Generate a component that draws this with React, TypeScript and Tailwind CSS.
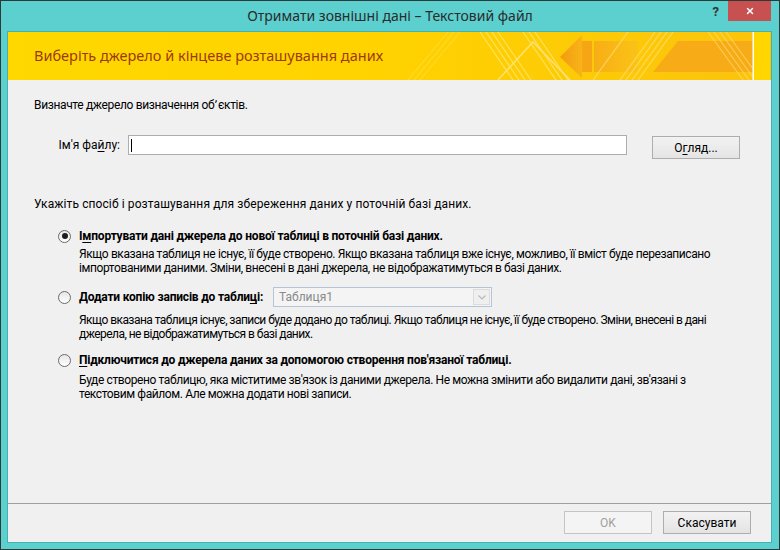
import { X } from "lucide-react";

function Radio({ checked }: { checked?: boolean }) {
  return (
    <span className="w-[13px] h-[13px] rounded-full border border-[#6a6a6a] bg-gradient-to-b from-[#e6e6e6] to-white flex items-center justify-center shrink-0">
      {checked && <span className="w-[6px] h-[6px] rounded-full bg-[#1c1c1c]" />}
    </span>
  );
}

function Banner() {
  return (
    <div className="relative h-[48px] shrink-0 bg-gradient-to-r from-[#ffd800] via-[#ffd200] to-[#fbc30c] flex items-center pl-[26px]">
      <svg className="absolute inset-0" width="762" height="48" viewBox="0 0 762 48">
        <defs>
          <linearGradient id="arrow" x1="0" x2="1" y1="0" y2="0">
            <stop offset="0" stopColor="#f39a10" />
            <stop offset="1" stopColor="#f8b418" />
          </linearGradient>
          <linearGradient id="shaft" x1="0" x2="1" y1="0" y2="0">
            <stop offset="0" stopColor="#f7ae16" />
            <stop offset="1" stopColor="#fbc315" />
          </linearGradient>
        </defs>
        {/* faint stripes */}
        <g stroke="#fff3a0" strokeOpacity="0.35" strokeWidth="1">
          <line x1="400" y1="48" x2="440" y2="0" />
          <line x1="406" y1="48" x2="446" y2="0" />
          <line x1="412" y1="48" x2="452" y2="0" />
        </g>
        <g stroke="#fff2a0" strokeOpacity="0.55" strokeWidth="1.2">
          <line x1="472" y1="0" x2="505" y2="48" />
          <line x1="478" y1="0" x2="511" y2="48" />
          <line x1="484" y1="0" x2="517" y2="48" />
          <line x1="490" y1="0" x2="523" y2="48" />
          <line x1="515" y1="0" x2="548" y2="48" />
          <line x1="521" y1="0" x2="554" y2="48" />
          <line x1="527" y1="0" x2="560" y2="48" />
        </g>
        <polyline points="490,48 525,10 562,48" fill="none" stroke="#ffe27a" strokeOpacity="0.9" strokeWidth="1.6" />
        {/* arrow */}
        <polygon points="552,25 574,3 574,46" fill="url(#arrow)" />
        <rect x="574" y="9" width="10" height="31" fill="#f6a514" />
        <rect x="586" y="9" width="44" height="31" fill="url(#shaft)" />
        <g stroke="#ffe07a" strokeOpacity="0.7" strokeWidth="1.2">
          <line x1="585" y1="48" x2="620" y2="0" />
          <line x1="612" y1="48" x2="647" y2="0" />
          <line x1="618" y1="48" x2="653" y2="0" />
          <line x1="624" y1="48" x2="659" y2="0" />
          <line x1="630" y1="48" x2="665" y2="0" />
        </g>
        {/* trapezoid */}
        <polygon points="645,40 670,9 745,9 745,40" fill="#f7ab17" />
        <g stroke="#ffdf7a" strokeOpacity="0.6" strokeWidth="1.2">
          <line x1="700" y1="0" x2="735" y2="48" />
          <line x1="706" y1="0" x2="741" y2="48" />
          <line x1="712" y1="0" x2="747" y2="48" />
          <line x1="718" y1="0" x2="753" y2="48" />
        </g>
        <rect x="745" y="0" width="17" height="48" fill="#ffd600" />
        <rect x="744.5" y="0" width="1.5" height="48" fill="#ffffff" />
      </svg>
      <span className="relative font-['Noto_Sans',sans-serif] text-[14.5px] text-[#9c3a0c]">
        Виберіть джерело й кінцеве розташування даних
      </span>
    </div>
  );
}

function Btn({ children, disabled }: { children: React.ReactNode; disabled?: boolean }) {
  return (
    <div
      className={
        disabled
          ? "w-[88px] h-[23px] border border-[#c4c4c4] bg-[#f4f4f4] text-[#a0a0a0] flex items-center justify-center"
          : "w-[88px] h-[23px] border border-[#adadad] bg-gradient-to-b from-[#f2f2f2] to-[#e4e4e4] flex items-center justify-center"
      }
    >
      {children}
    </div>
  );
}

export default function App() {
  return (
    <div className="w-[780px] h-[550px] bg-[#5ccfcf] border border-[#2e3a3a] flex flex-col overflow-hidden font-['Roboto',sans-serif] text-[12px] text-black">
      {/* title bar */}
      <div className="relative h-[30px] shrink-0 flex items-center justify-center">
        <span className="font-['Noto_Sans',sans-serif] text-[14px] text-[#2b2b2b] -mt-[1px]">
          Отримати зовнішні дані – Текстовий файл
        </span>
        <span className="absolute right-[60px] top-[1px] text-[13px] font-bold text-[#333]">?</span>
        <div className="absolute right-[8px] top-0 w-[43px] h-[20px] bg-[#c75050] flex items-center justify-center">
          <X className="w-[10px] h-[10px] text-white" strokeWidth={3.5} />
        </div>
      </div>

      {/* client area */}
      <div className="flex-1 ml-[6px] mr-[7px] mb-[6px] border border-[#45b2b2] bg-[#f0f0f0] flex flex-col">
        <Banner />

        <div className="flex-1 pl-[26px] leading-[16px]">
          <div className="mt-[17px] tracking-[-0.35px]">Визначте джерело визначення об՚єктів.</div>

          <div className="mt-[22px] flex items-start">
            <div className="w-[86px] h-[20px] flex items-center justify-end">
              Ім'я фа<span className="underline underline-offset-2">й</span>лу:
            </div>
            <div className="ml-[8px] w-[499px] h-[20px] border border-[#abadb3] bg-white flex items-center pl-[2px]">
              <span className="w-[1px] h-[13px] bg-black" />
            </div>
            <div className="ml-[25px] mt-[1px]">
              <Btn>
                О<span className="underline underline-offset-2">г</span>ляд...
              </Btn>
            </div>
          </div>

          <div className="mt-[37px] tracking-[0.1px]">
            Укажіть спосіб і розташування для збереження даних у поточній базі даних.
          </div>

          <div className="ml-[24px]">
            <div className="mt-[16px] flex items-center gap-[8px]">
              <Radio checked />
              <span className="font-bold whitespace-nowrap tracking-[-0.2px]">
                І<span className="underline underline-offset-2">м</span>портувати дані джерела до нової таблиці в поточній базі даних.
              </span>
            </div>
            <div className="mt-[3px] ml-[21px] leading-[14px] whitespace-nowrap tracking-[-0.4px]">
              Якщо вказана таблиця не існує, її буде створено. Якщо вказана таблиця вже існує, можливо, її вміст буде перезаписано
              <br />
              імпортованими даними. Зміни, внесені в дані джерела, не відображатимуться в базі даних.
            </div>

            <div className="mt-[12px] h-[20px] flex items-center">
              <Radio />
              <span className="ml-[8px] w-[194px] font-bold whitespace-nowrap tracking-[-0.2px]">
                Додати копію записів до табли<span className="underline underline-offset-2">ц</span>і:
              </span>
              <div className="w-[219px] h-[20px] border border-[#b5c4d6] bg-[#f4f4f4] flex items-center">
                <span className="flex-1 pl-[5px] text-[#8a8a8a]">Таблиця1</span>
                <div className="w-[17px] h-[16px] mr-[1px] border border-[#dcdcdc] bg-[#efefef] flex items-center justify-center">
                  <svg width="8" height="5" viewBox="0 0 8 5">
                    <polyline points="0.5,0.5 4,4 7.5,0.5" fill="none" stroke="#b8b8b8" strokeWidth="1.2" />
                  </svg>
                </div>
              </div>
            </div>
            <div className="mt-[6px] ml-[21px] leading-[14px] whitespace-nowrap tracking-[-0.55px]">
              Якщо вказана таблиця існує, записи буде додано до таблиці. Якщо таблиця не існує, її буде створено. Зміни, внесені в дані
              <br />
              джерела, не відображатимуться в базі даних.
            </div>

            <div className="mt-[11px] flex items-center gap-[8px]">
              <Radio />
              <span className="font-bold whitespace-nowrap tracking-[-0.2px]">
                <span className="underline underline-offset-2">П</span>ідключитися до джерела даних за допомогою створення пов'язаної таблиці.
              </span>
            </div>
            <div className="mt-[5px] ml-[21px] leading-[14px] whitespace-nowrap tracking-[-0.4px]">
              Буде створено таблицю, яка міститиме зв'язок із даними джерела. Не можна змінити або видалити дані, зв'язані з
              <br />
              текстовим файлом. Але можна додати нові записи.
            </div>
          </div>
        </div>

        {/* footer */}
        <div className="h-[39px] shrink-0 border-t border-[#a0a0a0] pt-[7px] pr-[20px] flex justify-end gap-[11px]">
          <Btn disabled>OK</Btn>
          <Btn>Скасувати</Btn>
        </div>
      </div>
    </div>
  );
}
